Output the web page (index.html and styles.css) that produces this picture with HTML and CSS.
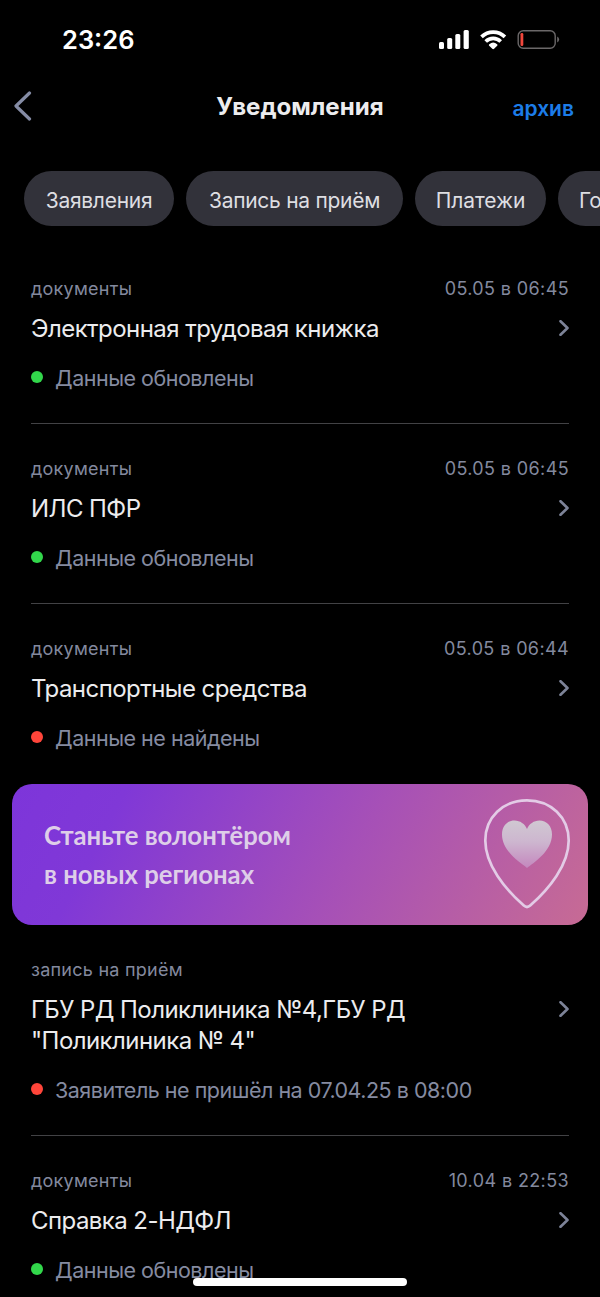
FILE: index.html
```html
<!DOCTYPE html>
<html lang="ru">
<head>
<meta charset="utf-8">
<title>Уведомления</title>
<link rel="stylesheet" href="styles.css">
</head>
<body>
<div class="screen">
  <div class="statusbar">
    <span class="clock">23:26</span>
    <svg class="indicators" width="122" height="22" viewBox="0 0 122 22">
      <g fill="#fff">
        <rect x="0" y="13" width="5" height="7" rx="1.5"/>
        <rect x="8.2" y="9" width="5" height="11" rx="1.5"/>
        <rect x="16.3" y="5" width="5" height="15" rx="1.5"/>
        <rect x="24.6" y="1" width="5.2" height="19" rx="1.5"/>
        <path d="M53.3 19.800l-3.100-3.100a1 1 0 0 1 .1-1.500a5.900 5.900 0 0 1 7.800 0a1 1 0 0 1 .1 1.500l-3.100 3.100a1.300 1.300 0 0 1-1.800 0z"/>
      </g>
      <g fill="none" stroke="#fff" stroke-width="3.7">
        <path d="M42.5 7.900a16.800 16.800 0 0 1 23.400 0"/>
        <path d="M46.700 12.500a10.700 10.700 0 0 1 15 0"/>
      </g>
      <rect x="79.2" y="1.7" width="37" height="17.6" rx="5" fill="none" stroke="#6b6869" stroke-width="1.4"/>
      <rect x="81.5" y="4" width="2.8" height="13" rx="1.3" fill="#f0473c"/>
      <path d="M118.2 7.6a3.3 3.3 0 0 1 0 6z" fill="#6b6869"/>
    </svg>
  </div>

  <header class="navbar">
    <svg class="back" width="20" height="30" viewBox="0 0 20 30" fill="none" stroke="#858ca5" stroke-width="3.2" stroke-linecap="round" stroke-linejoin="round"><path d="M16.5 2L3 15L16.5 28"/></svg>
    <h1 class="title">Уведомления</h1>
    <span class="archive">архив</span>
  </header>

  <nav class="chips">
    <span class="chip chip-a">Заявления</span>
    <span class="chip chip-b">Запись на приём</span>
    <span class="chip chip-c">Платежи</span>
    <span class="chip chip-d">Го</span>
  </nav>

  <main>
    <article class="item">
      <div class="meta"><span>документы</span><time>05.05 в 06:45</time></div>
      <div class="head"><h2>Электронная трудовая книжка</h2><svg class="arrow" viewBox="0 0 10 16"><path d="M1.5 1.2L8.5 8L1.5 14.8"/></svg></div>
      <p class="state ok">Данные обновлены</p>
    </article>
    <article class="item">
      <div class="meta"><span>документы</span><time>05.05 в 06:45</time></div>
      <div class="head"><h2>ИЛС ПФР</h2><svg class="arrow" viewBox="0 0 10 16"><path d="M1.5 1.2L8.5 8L1.5 14.8"/></svg></div>
      <p class="state ok">Данные обновлены</p>
    </article>
    <article class="item last">
      <div class="meta"><span>документы</span><time>05.05 в 06:44</time></div>
      <div class="head"><h2>Транспортные средства</h2><svg class="arrow" viewBox="0 0 10 16"><path d="M1.5 1.2L8.5 8L1.5 14.8"/></svg></div>
      <p class="state bad">Данные не найдены</p>
    </article>

    <section class="banner">
      <p class="slogan">Станьте волонтёром<br>в новых регионах</p>
      <svg class="pin" width="88" height="114" viewBox="0 0 88 114">
        <defs><linearGradient id="heart" x1="0" y1="0" x2="0" y2="1"><stop offset="0" stop-color="#d0c8d2"/><stop offset=".45" stop-color="#cdb6cf"/><stop offset="1" stop-color="#c487be"/></linearGradient></defs>
        <path d="M44 3.3C20 3.3 2.3 20.5 2.3 43.5C2.3 68 22 92 40.8 108.6Q44 111.4 47.2 108.6C66 92 85.7 68 85.7 43.5C85.7 20.5 68 3.3 44 3.3Z" fill="none" stroke="#e3cbe6" stroke-width="2.7"/>
        <path d="M44 71C38 66.200 19 54.500 19 37.500C19 29 24.500 23.500 31.500 23.500C37 23.500 42 27 44 32C46 27 51 23.500 56.500 23.500C63.500 23.500 69 29 69 37.500C69 54.500 50 66.200 44 71Z" fill="url(#heart)"/>
      </svg>
    </section>

    <article class="item tall">
      <div class="meta"><span>запись на приём</span></div>
      <div class="head"><h2>ГБУ РД Поликлиника №4,ГБУ РД<br>"Поликлиника № 4"</h2><svg class="arrow" viewBox="0 0 10 16"><path d="M1.5 1.2L8.5 8L1.5 14.8"/></svg></div>
      <p class="state bad">Заявитель не пришёл на 07.04.25 в 08:00</p>
    </article>
    <article class="item last">
      <div class="meta"><span>документы</span><time>10.04 в 22:53</time></div>
      <div class="head"><h2>Справка 2-НДФЛ</h2><svg class="arrow" viewBox="0 0 10 16"><path d="M1.5 1.2L8.5 8L1.5 14.8"/></svg></div>
      <p class="state ok">Данные обновлены</p>
    </article>
  </main>
  <div class="home-indicator"></div>
</div>
</body>
</html>
```
FILE: styles.css
```css
* { box-sizing: border-box; }
body { margin: 0; background: #000; }
h1, h2, p { margin: 0; font-weight: 400; }
.screen {
  position: relative;
  width: 600px;
  height: 1297px;
  overflow: hidden;
  background: #000;
  color: #ececee;
  font-family: Inter, "Liberation Sans", sans-serif;
  white-space: nowrap;
}
.statusbar {
  display: flex;
  justify-content: space-between;
  align-items: center;
  height: 80px;
  padding: 0 39px 0 62px;
}
.clock { padding-bottom: 2px; color: #fff; font-size: 25.500px; font-weight: 600; }
.navbar {
  display: grid;
  grid-template-columns: 1fr auto 1fr;
  align-items: center;
  height: 54px;
  padding: 0 26px 0 13px;
}
.back { display: block; margin-bottom: 2px; }
.title { margin-left: 13px; font-size: 24.100px; font-weight: 700; line-height: 32px; }
.archive { justify-self: end; padding-top: 2px; color: #1c7ce8; font-size: 21px; font-weight: 600; }
.chips { display: flex; gap: 12px; margin-top: 37px; padding-left: 24px; }
.chip {
  flex: none;
  height: 55px;
  border-radius: 28px;
  background: #32323a;
  color: #dedee2;
  font-size: 21px;
  line-height: 60px;
  letter-spacing: -0.28px;
  text-align: center;
}
.chip-a { width: 150px; }
.chip-b { width: 217px; }
.chip-c { width: 131px; letter-spacing: -0.1px; }
.chip-d { width: 80px; padding-left: 21px; text-align: left; }
main { padding-top: 18px; }
.item {
  height: 180px;
  margin: 0 31px;
  padding-top: 33px;
  border-bottom: 1px solid #424245;
}
.tall { height: 211px; }
.last { border-bottom: 0; }
.meta {
  display: flex;
  justify-content: space-between;
  height: 24px;
  color: #83899e;
  font-size: 18px;
  line-height: 24px;
  letter-spacing: 0.25px;
}
.meta time { letter-spacing: 0.38px; }
.head { display: flex; justify-content: space-between; margin-top: 12px; }
h2 { font-size: 24px; line-height: 31px; letter-spacing: -0.56px; }
.arrow {
  width: 10px;
  height: 16px;
  margin-top: 7px;
  fill: none;
  stroke: #7d8398;
  stroke-width: 2.600;
  stroke-linecap: round;
  stroke-linejoin: round;
}
.state {
  display: flex;
  align-items: center;
  gap: 12px;
  margin-top: 20px;
  color: #858ba1;
  font-size: 21.500px;
  line-height: 28px;
  letter-spacing: -0.49px;
}
.state::before {
  content: "";
  width: 12px;
  height: 12px;
  margin-bottom: 3px;
  border-radius: 50%;
}
.ok::before { background: #32d74b; }
.bad::before { background: #ff453a; }
.banner {
  display: flex;
  justify-content: space-between;
  height: 141px;
  margin: 0 12px;
  padding: 13px 17px 0 32px;
  border-radius: 20px;
  background: linear-gradient(118deg, #7d35da 0%, #8038d7 18%, #a650b7 58%, #c76b94 100%);
}
.slogan {
  padding-top: 19px;
  color: #decee8;
  font-family: Lato, sans-serif;
  font-size: 25.700px;
  font-weight: 700;
  line-height: 39px;
}
.home-indicator {
  position: absolute;
  left: 193px;
  bottom: 11px;
  width: 214px;
  height: 8px;
  border-radius: 4px;
  background: #fff;
}
```
